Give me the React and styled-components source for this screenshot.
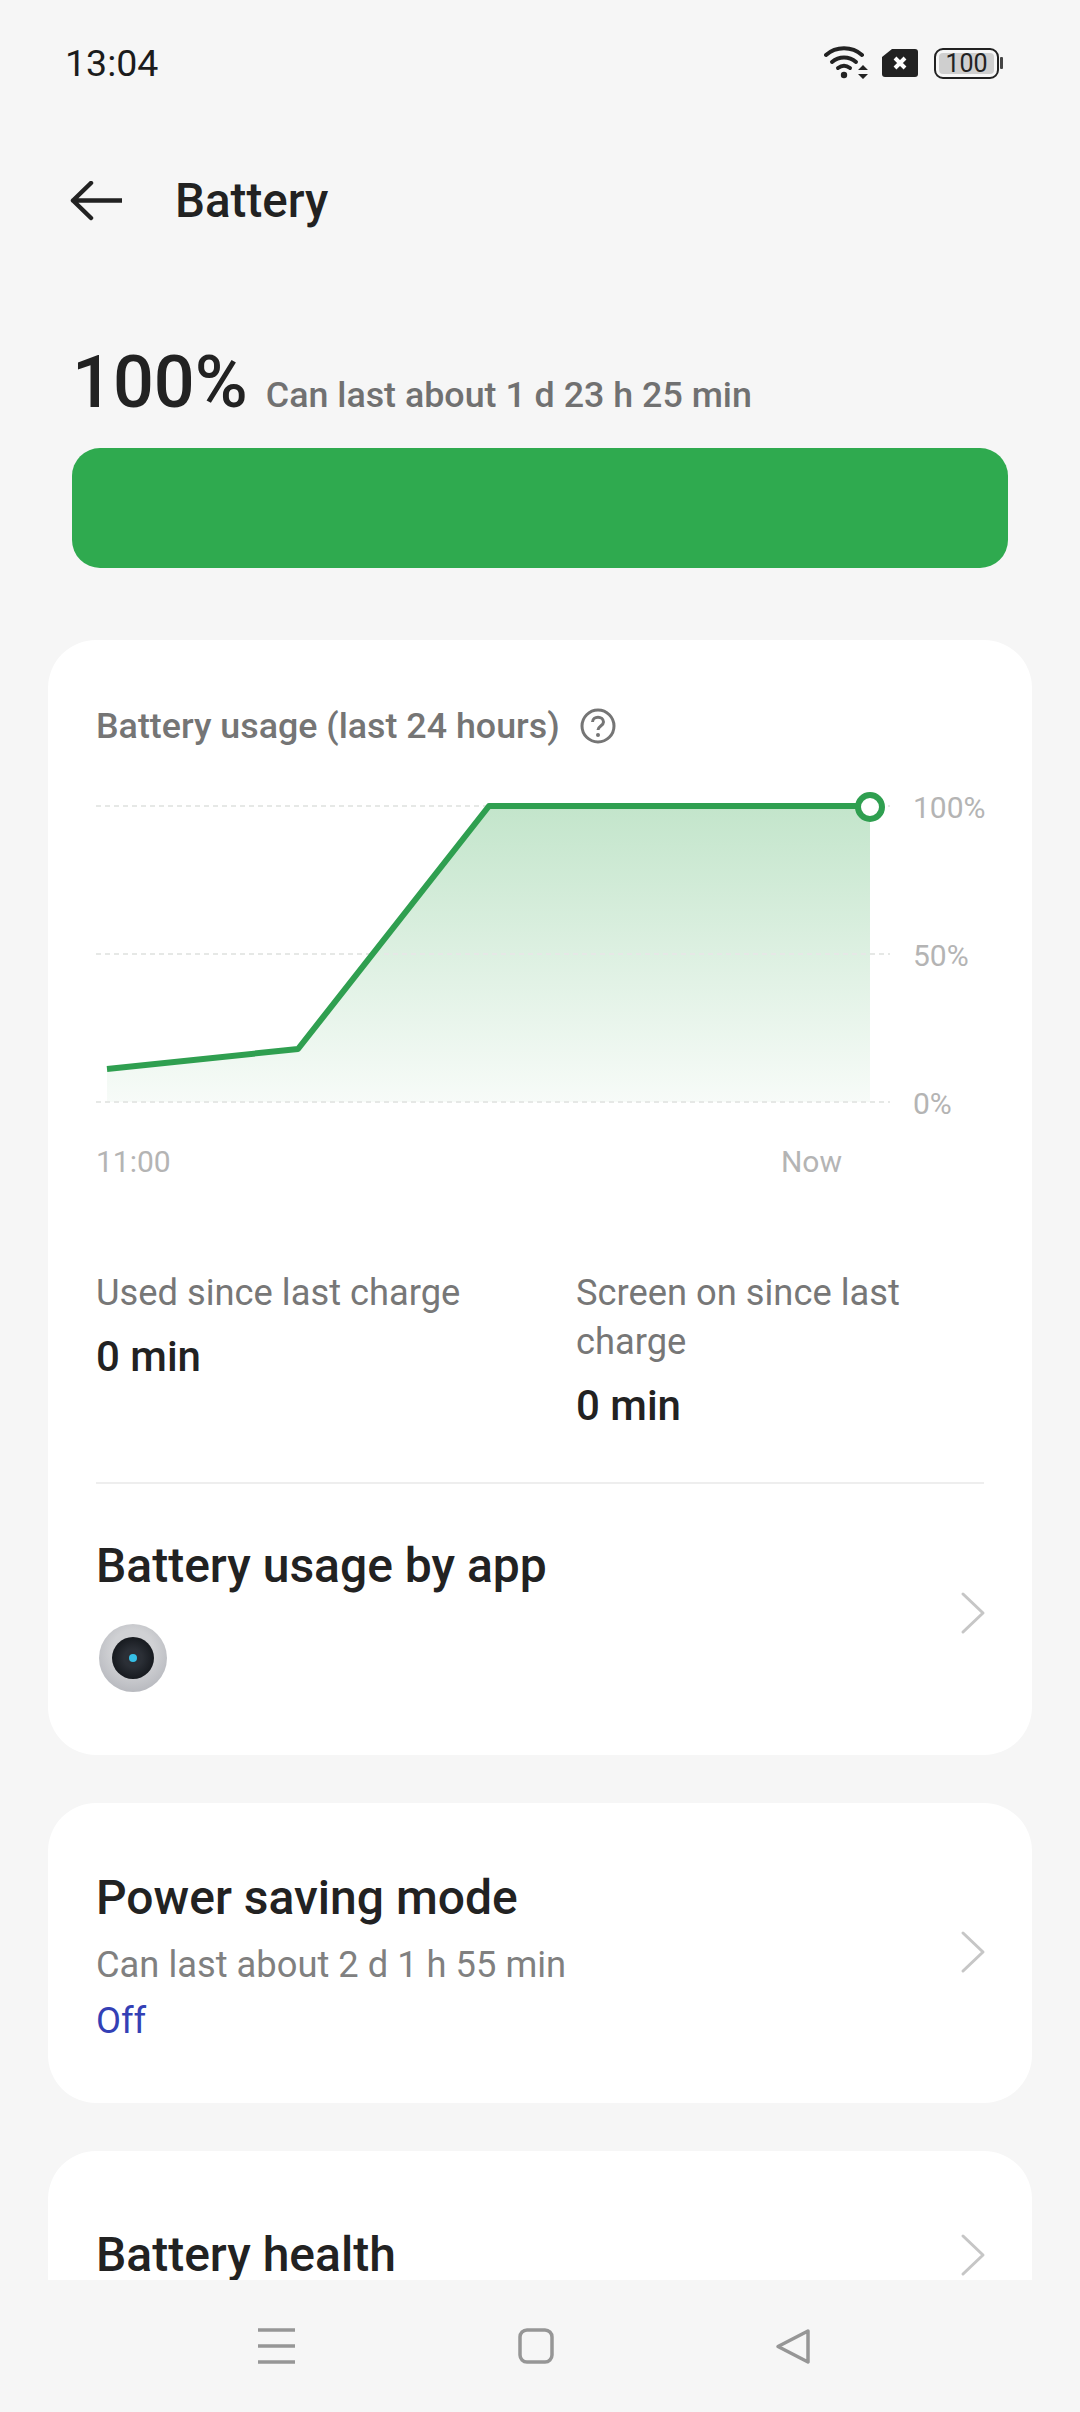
import React from 'react'
import styled, { createGlobalStyle } from 'styled-components'

const GlobalStyle = createGlobalStyle`
  html, body {
    margin: 0;
    padding: 0;
    background: #f6f6f6;
  }
  * {
    box-sizing: border-box;
  }
`

const Screen = styled.div`
  width: 1080px;
  height: 2412px;
  display: flex;
  flex-direction: column;
  overflow: hidden;
  background: #f6f6f6;
  color: #222;
  font-family: Roboto, "Liberation Sans", sans-serif;
`

const Content = styled.div`
  flex: 1;
  min-height: 0;
  overflow: hidden;
`

// status bar
const StatusBar = styled.div`
  height: 62px;
  margin-top: 32px;
  padding: 0 81px 0 65px;
  display: flex;
  align-items: center;
  justify-content: space-between;
`

const Time = styled.div`
  font-size: 37.5px;
  line-height: 64px;
  color: #1c1c1c;
`

const StatusIcons = styled.div`
  display: flex;
  align-items: center;
`

const SimIcon = styled.svg`
  margin: 0 16.5px 0 14px;
`

const BatteryIcon = styled.div`
  position: relative;
  width: 65px;
  height: 31px;
  padding: 3px;
  border: 2.5px solid #222;
  border-radius: 9px;
  &::after {
    content: '';
    position: absolute;
    right: -6px;
    top: 7px;
    width: 3px;
    height: 12px;
    background: #444;
    border-radius: 1px;
  }
`

const BatteryLevel = styled.div`
  height: 100%;
  background: #cfcfcf;
  border-radius: 4px;
  font-size: 25px;
  line-height: 21px;
  text-align: center;
  color: #222;
`

// header
const Header = styled.div`
  height: 90px;
  margin-top: 62px;
  padding-left: 70px;
  display: flex;
  align-items: center;
`

const BackIcon = styled.svg`
  margin-right: 53px;
`

const PageTitle = styled.div`
  font-size: 47.5px;
  font-weight: 500;
  color: #222;
`

// battery level summary
const Summary = styled.div`
  margin-top: 97px;
  padding: 0 72px;
`

const LevelRow = styled.div`
  display: flex;
  align-items: baseline;
  height: 80px;
`

const Percent = styled.span`
  font-size: 72px;
  font-weight: 500;
  line-height: 80px;
  color: #222;
  margin-right: 18px;
`

const Remaining = styled.span`
  font-size: 35.8px;
  font-weight: 500;
  color: #717171;
`

const LevelBar = styled.div`
  height: 120px;
  margin-top: 25px;
  background: #2faa4f;
  border-radius: 28px;
`

// cards
const Card = styled.div`
  margin: ${(p) => p.$top}px 48px 0;
  padding: 0 48px;
  background: #fff;
  border-radius: 48px;
`

const UsageTitleRow = styled.div`
  display: flex;
  align-items: center;
  padding-top: 64px;
  height: 108px;
`

const UsageTitle = styled.div`
  font-size: 35.8px;
  font-weight: 500;
  color: #757575;
  margin-right: 20px;
`

const ChartRow = styled.div`
  display: flex;
  margin-top: 43px;
  height: 326px;
`

const ChartSvg = styled.svg`
  flex: none;
  display: block;
`

const YLabels = styled.div`
  display: flex;
  flex-direction: column;
  justify-content: space-between;
  height: 296px;
  margin: 17px 0 0 23px;
`

const AxisLabel = styled.div`
  font-size: 30px;
  line-height: 0;
  color: #b4b4b4;
`

const XLabels = styled.div`
  display: flex;
  justify-content: space-between;
  width: 746px;
  margin-top: 27px;
  height: 36px;
  font-size: 30px;
  line-height: 36px;
  color: #b4b4b4;
`

const Stats = styled.div`
  display: grid;
  grid-template-columns: 480px 1fr;
  margin-top: 88px;
  padding-bottom: 51px;
  border-bottom: 2px solid #eeeeee;
`

const StatLabel = styled.div`
  font-size: 36.3px;
  line-height: 49px;
  color: #777;
  width: 370px;
`

const StatValue = styled.div`
  font-size: 42px;
  font-weight: 500;
  line-height: 50px;
  margin-top: 15px;
  color: #222;
`

const LinkRow = styled.div`
  display: flex;
  align-items: center;
  justify-content: space-between;
  padding: ${(p) => p.$padding};
`

const RowTitle = styled.div`
  font-size: 48px;
  font-weight: 500;
  line-height: 60px;
  color: #222;
`

const AppIcon = styled.div`
  position: relative;
  width: 68px;
  height: 68px;
  margin: 28px 0 1px 3px;
  border-radius: 50%;
  background: radial-gradient(circle at 50% 40%, #d0d1d4 40%, #a9abb2 100%);
  &::before {
    content: '';
    position: absolute;
    inset: 13px;
    border-radius: 50%;
    background: radial-gradient(circle, #2b2f36 30%, #15181d 75%);
  }
  &::after {
    content: '';
    position: absolute;
    left: 30px;
    top: 30px;
    width: 8px;
    height: 8px;
    border-radius: 50%;
    background: #36bfe6;
  }
`

const RowSub = styled.div`
  font-size: 36.3px;
  line-height: 49px;
  margin-top: ${(p) => p.$top}px;
  color: ${(p) => p.$color || '#808080'};
`

const RowChevron = styled.svg`
  flex: none;
  margin-right: -2px;
  margin-bottom: ${(p) => p.$lift || 0}px;
`

// navigation bar
const NavBar = styled.div`
  flex: none;
  height: 132px;
  padding: 48px 269px 0 258px;
  display: flex;
  align-items: flex-start;
  justify-content: space-between;
  background: #f6f6f6;
`

const Chevron = ({ lift }) => (
  <RowChevron $lift={lift} width="26" height="44" viewBox="0 0 26 44" fill="none">
    <path d="M3 3 L23 22 L3 41" stroke="#c6c6c6" strokeWidth="3" strokeLinecap="round" strokeLinejoin="round" />
  </RowChevron>
)

const WifiIcon = () => (
  <svg width="44" height="34" viewBox="0 0 44 34" fill="none">
    <g stroke="#222" strokeWidth="4" strokeLinecap="round">
      <path d="M2 9 C12 0 28 0 38 9" />
      <path d="M8 16 C15 10 25 10 32 16" />
      <path d="M14 22 C18 19 22 19 26 22" />
    </g>
    <circle cx="20" cy="29" r="3.2" fill="#222" />
    <path d="M34 24 L39 19 L44 24 Z M34 28 L44 28 L39 33 Z" fill="#222" />
  </svg>
)

// points of the usage line, in chart coordinates
const LINE = '11,278 202,258 393,15 774,15'
const AREA = '11,278 202,258 393,15 774,15 774,311 11,311'

const UsageChart = () => (
  <ChartSvg width="794" height="326" viewBox="0 0 794 326" fill="none">
    <defs>
      <linearGradient id="usageFill" x1="0" y1="0" x2="0" y2="1">
        <stop offset="0" stopColor="#c3e5cb" />
        <stop offset="1" stopColor="#f7fbf8" />
      </linearGradient>
    </defs>
    <polygon points={AREA} fill="url(#usageFill)" />
    {[15, 163, 311].map((y) => (
      <line key={y} x1="0" x2="794" y1={y} y2={y} stroke="#e6e8e6" strokeWidth="2" strokeDasharray="5 4" />
    ))}
    <polyline points={LINE} stroke="#2f9f50" strokeWidth="6" strokeLinejoin="round" />
    <circle cx="774" cy="16" r="12" fill="#fff" stroke="#2f9f50" strokeWidth="6" />
  </ChartSvg>
)

export default function App() {
  return (
    <Screen>
      <GlobalStyle />
      <Content>
        <StatusBar>
          <Time>13:04</Time>
          <StatusIcons>
            <WifiIcon />
            <SimIcon width="36" height="28" viewBox="0 0 36 28">
              <path d="M10 0 H33 a3 3 0 0 1 3 3 V25 a3 3 0 0 1 -3 3 H3 a3 3 0 0 1 -3 -3 V8 Z" fill="#222" />
              <path d="M13 9 L23 19 M23 9 L13 19" stroke="#fff" strokeWidth="4" />
            </SimIcon>
            <BatteryIcon>
              <BatteryLevel>100</BatteryLevel>
            </BatteryIcon>
          </StatusIcons>
        </StatusBar>

        <Header>
          <BackIcon width="52" height="40" viewBox="0 0 52 40" fill="none">
            <path d="M52 19.5 H3 M21 2 L3 19.5 L21 37" stroke="#222" strokeWidth="4.5" strokeLinejoin="round" strokeLinecap="round" />
          </BackIcon>
          <PageTitle>Battery</PageTitle>
        </Header>

        <Summary>
          <LevelRow>
            <Percent>100%</Percent>
            <Remaining>Can last about 1 d 23 h 25 min</Remaining>
          </LevelRow>
          <LevelBar />
        </Summary>

        <Card $top={72}>
          <UsageTitleRow>
            <UsageTitle>Battery usage (last 24 hours)</UsageTitle>
            <svg width="36" height="36" viewBox="0 0 36 36" fill="none">
              <circle cx="18" cy="18" r="16" stroke="#757575" strokeWidth="3" />
              <path d="M12.5 14 C12.5 7.5 23.5 7.5 23.5 14 C23.5 18 18 18 18 22" stroke="#757575" strokeWidth="3" />
              <circle cx="18" cy="27" r="2" fill="#757575" />
            </svg>
          </UsageTitleRow>

          <ChartRow>
            <UsageChart />
            <YLabels>
              <AxisLabel>100%</AxisLabel>
              <AxisLabel>50%</AxisLabel>
              <AxisLabel>0%</AxisLabel>
            </YLabels>
          </ChartRow>
          <XLabels>
            <span>11:00</span>
            <span>Now</span>
          </XLabels>

          <Stats>
            <div>
              <StatLabel>Used since last charge</StatLabel>
              <StatValue>0 min</StatValue>
            </div>
            <div>
              <StatLabel>Screen on since last charge</StatLabel>
              <StatValue>0 min</StatValue>
            </div>
          </Stats>

          <LinkRow $padding="52px 0 62px">
            <div>
              <RowTitle>Battery usage by app</RowTitle>
              <AppIcon />
            </div>
            <Chevron lift={4} />
          </LinkRow>
        </Card>

        <Card $top={48}>
          <LinkRow $padding="65px 0 58px">
            <div>
              <RowTitle>Power saving mode</RowTitle>
              <RowSub $top={12}>Can last about 2 d 1 h 55 min</RowSub>
              <RowSub $top={7} $color="#3340b5">Off</RowSub>
            </div>
            <Chevron lift={10} />
          </LinkRow>
        </Card>

        <Card $top={48}>
          <LinkRow $padding="74px 0 100px">
            <RowTitle>Battery health</RowTitle>
            <Chevron />
          </LinkRow>
        </Card>
      </Content>

      <NavBar>
        <svg width="38" height="36" viewBox="0 0 38 36" fill="none">
          <path d="M0 2 H37 M0 18 H37 M0 34 H37" stroke="#969696" strokeWidth="3.5" />
        </svg>
        <svg width="36" height="36" viewBox="0 0 36 36" fill="none">
          <rect x="2" y="2" width="32" height="32" rx="7" stroke="#969696" strokeWidth="3.5" />
        </svg>
        <svg width="36" height="37" viewBox="0 0 36 37" fill="none">
          <path d="M33 3 L3 18.5 L33 34 Z" stroke="#969696" strokeWidth="3.5" strokeLinejoin="round" />
        </svg>
      </NavBar>
    </Screen>
  )
}
